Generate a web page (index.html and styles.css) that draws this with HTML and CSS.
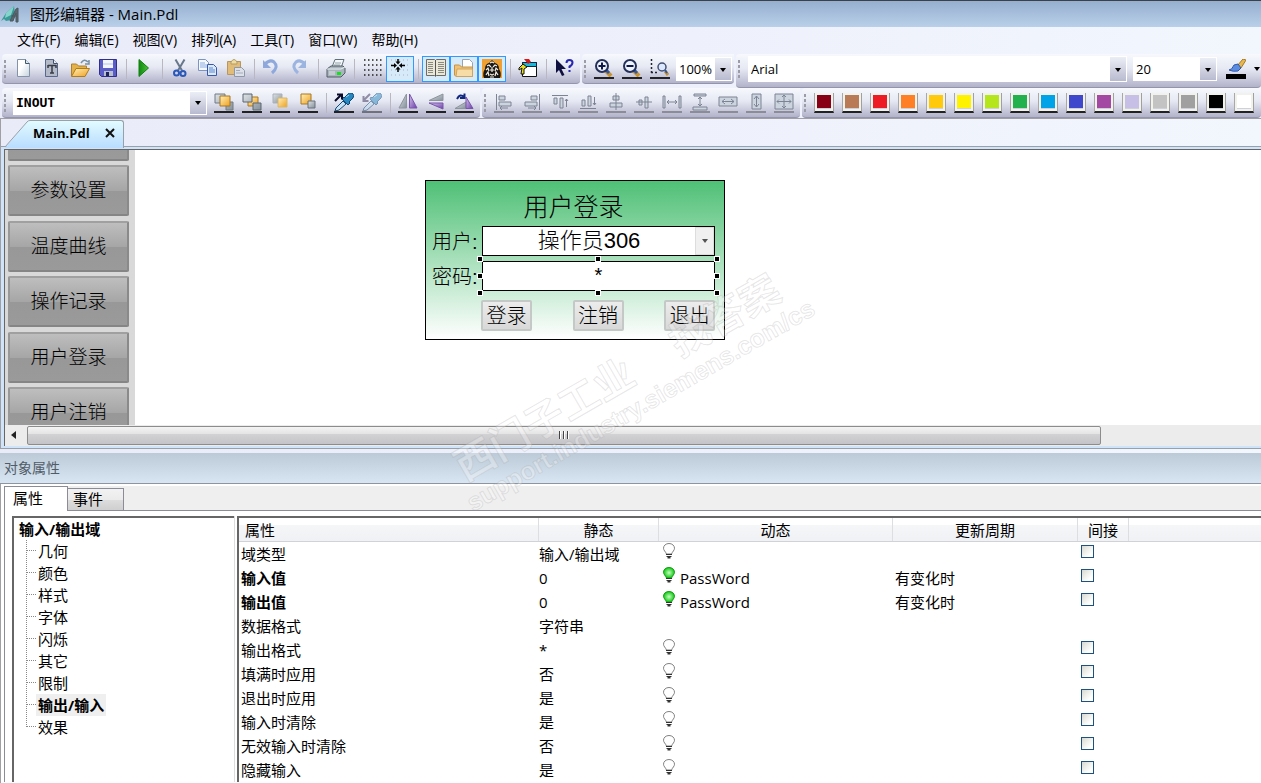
FILE: index.html
```html
<!DOCTYPE html>
<html lang="zh-CN">
<head>
<meta charset="utf-8">
<title>图形编辑器 - Main.Pdl</title>
<link rel="stylesheet" href="styles.css">
</head>
<body>
<svg class="defs" width="0" height="0" aria-hidden="true">
  <defs>
    <linearGradient id="gPage" x1="0" y1="0" x2="1" y2="1"><stop offset=".4" stop-color="#fff"/><stop offset="1" stop-color="#c3d3dc"/></linearGradient>
    <linearGradient id="gGold" x1="0" y1="0" x2="1" y2="1"><stop offset="0" stop-color="#fff0b8"/><stop offset="1" stop-color="#f0a020"/></linearGradient>
    <linearGradient id="gGray" x1="0" y1="0" x2="1" y2="1"><stop offset="0" stop-color="#dfe3e6"/><stop offset="1" stop-color="#84909a"/></linearGradient>
    <linearGradient id="gGreen" x1="0" y1="0" x2="1" y2="0"><stop offset="0" stop-color="#0f8a10"/><stop offset="1" stop-color="#4cc038"/></linearGradient>
    <linearGradient id="gViolet" x1="0" y1="0" x2="1" y2="1"><stop offset="0" stop-color="#d8c8ec"/><stop offset="1" stop-color="#6a3ca8"/></linearGradient>
    <linearGradient id="gTab" x1="0" y1="0" x2="0" y2="1"><stop offset="0" stop-color="#e2fbff"/><stop offset="1" stop-color="#b9dcff"/></linearGradient>
    <radialGradient id="gLamp"><stop offset="0" stop-color="#c8ffc0"/><stop offset="1" stop-color="#10c814"/></radialGradient>
    <symbol id="bulb" viewBox="0 0 12 16">
      <path d="M6 .5C2.800.5.5 2.600.5 5.200c0 2.200 2 3.300 3 5.800h5c1-2.500 3-3.600 3-5.800C11.500 2.600 9.200.5 6 .5z" fill="#fff" stroke="#808080"/>
      <path d="M3 11.500h6M3.500 13.500h5" stroke="#333" fill="none"/><path d="M4.500 14h3v1.500h-3z" fill="#333"/>
    </symbol>
    <symbol id="bulb-on" viewBox="0 0 12 16">
      <path d="M6 .5C2.800.5.5 2.600.5 5.200c0 2.200 2 3.300 3 5.800h5c1-2.500 3-3.600 3-5.800C11.500 2.600 9.200.5 6 .5z" fill="url(#gLamp)" stroke="#12a012"/>
      <path d="M3 11.500h6M3.500 13.500h5" stroke="#333" fill="none"/><path d="M4.500 14h3v1.500h-3z" fill="#333"/>
    </symbol>
    <symbol id="down" viewBox="0 0 8 8"><path d="M1 2h6L4 6z" fill="#000"/></symbol>
    <symbol id="dropper" viewBox="0 0 20 18">
      <path d="M1 18l1-3 7-7 3 3-7 6z" fill="#c8e4f4" stroke="#184878"/>
      <path d="M8 6l6 6 2-2-1-1 4-4q2-3-1-5-3-1-5 2l-3 3-1-1z" fill="#2a88c0" stroke="#0e4878"/>
      <path d="M12 4l3-2" stroke="#9ad8f8"/>
    </symbol>
  </defs>
</svg>

<header class="titlebar">
  <svg class="logo" viewBox="0 0 20 18"><path d="M1 16L6 8 14 1l1 8-4 6-5 1-2-2z" fill="#3a9a98"/><path d="M6 8l8-7-3 9-6 3z" fill="#84d4cc"/><path d="M10 16l6-12 2-1v14h-2V8l-3 8zM11 11h6" stroke="#4a5860" fill="#5c6870"/></svg>
  <h1 class="title">图形编辑器 - Main.Pdl</h1>
</header>

<nav class="menubar" aria-label="主菜单">
  <button>文件(F)</button><button>编辑(E)</button><button>视图(V)</button><button>排列(A)</button><button>工具(T)</button><button>窗口(W)</button><button>帮助(H)</button>
</nav>

<div class="toolrow">
  <div class="tools" role="toolbar" aria-label="标准">
    <span class="grip"></span>
    <button class="tool" aria-label="新建"><svg viewBox="0 0 20 20"><path d="M3.500.5h8l4 4v13h-12z" fill="url(#gPage)" stroke="#8494a8"/><path d="M11.500.5v4h4" fill="#dce8f0" stroke="#40586c"/></svg></button>
    <button class="tool" aria-label="新建文本"><svg viewBox="0 0 20 20"><path d="M3.500.5h8l4 4v13h-12z" fill="#b4bac8" stroke="#58688c"/><path d="M11.500.5v4h4" fill="#e8eef4" stroke="#40506c"/><path d="M6 6.500h8M10 7v7M8 14h4M6 6v3M14 6v3" stroke="#383c48" stroke-width="1.500" fill="none"/></svg></button>
    <button class="tool" aria-label="打开"><svg viewBox="0 0 20 20"><path d="M1.500 17V5h5l2 2h8v4" fill="#e4b048" stroke="#b08028"/><path d="M1.500 17.500L6 9.500h13.500l-4.500 8z" fill="url(#gGold)" stroke="#b07c18"/><path d="M11 4q3-5 7-1m1-2v4h-4" fill="none" stroke="#7890a4" stroke-width="1.500"/></svg></button>
    <button class="tool" aria-label="保存"><svg viewBox="0 0 20 20"><path d="M1.500.5h17v17H3.500l-2-2z" fill="#5a5cc8" stroke="#30308c"/><path d="M5 1h10v8H5z" fill="#f0f4fc"/><path d="M5 5h10" stroke="#b8c4e4"/><path d="M6 12h9v5H6z" fill="#b8c0cc"/><path d="M8 13h3v4H8z" fill="#20245c"/></svg></button>
    <span class="sep"></span>
    <button class="tool" aria-label="运行"><svg viewBox="0 0 20 20"><path d="M5 .5L14.500 9 5 17.500z" fill="url(#gGreen)" stroke="#108010"/></svg></button>
    <span class="sep"></span>
    <button class="tool" aria-label="剪切"><svg viewBox="0 0 20 20"><path d="M5.500.5l6.500 11M14.500.5L8 11.500" stroke="#68788c" stroke-width="2"/><circle cx="6.500" cy="14" r="2.500" fill="none" stroke="#2a58b8" stroke-width="2"/><circle cx="13" cy="14.500" r="2.500" fill="none" stroke="#2a58b8" stroke-width="2"/></svg></button>
    <button class="tool" aria-label="复制"><svg viewBox="0 0 20 20"><path d="M.5.5h7l3 3v8H.5z" fill="#f4f8ff" stroke="#7c94c0"/><path d="M2 4h5M2 6h7M2 8h7" stroke="#8cacdc"/><path d="M9.500 5.500h6l3 3v8h-9z" fill="#dce8fc" stroke="#3858a8"/><path d="M11 9h4M11 11h6M11 13h6" stroke="#5888d0"/></svg></button>
    <button class="tool" aria-label="粘贴"><svg viewBox="0 0 20 20"><path d="M1.500 2.500h13v13h-13z" fill="#e0bc78" stroke="#b8965c"/><path d="M5 3q3-5 6 0v2H5z" fill="#f0dca0" stroke="#b09c68"/><path d="M8.500 8.500h7l3 3v6h-10z" fill="#dce0e8" stroke="#9098a8"/><path d="M10 11.500h4M10 14h7" stroke="#a4acbc"/></svg></button>
    <span class="sep"></span>
    <button class="tool" aria-label="撤销"><svg viewBox="0 0 20 20"><path d="M3 5q5-5 9-2 5 5-2 11" stroke="#8ea8dc" stroke-width="3" fill="none"/><path d="M1 1v8h8z" fill="#8ea8dc"/></svg></button>
    <button class="tool" aria-label="重做"><svg viewBox="0 0 20 20"><path d="M15 5Q10 0 6 3q-5 5 2 11" stroke="#9cb4e0" stroke-width="3" fill="none"/><path d="M16 1v8H8z" fill="#9cb4e0"/></svg></button>
    <span class="sep"></span>
    <button class="tool" aria-label="打印"><svg viewBox="0 0 20 20"><path d="M6 8l3-7.500h9L15 9" fill="#f4f8fa" stroke="#607078"/><path d="M9 4h6M8 6h6" stroke="#90a0a8"/><path d="M1 10l4-3h12l2 2v5l-4 4H1z" fill="#aab4bc" stroke="#505c64"/><path d="M1 10h14l4-2" fill="none" stroke="#e8f0f0"/><path d="M11 13h4v3h-4z" fill="#18e020"/><path d="M3 13h6M3 15h6" stroke="#dfe5e8"/></svg></button>
    <span class="sep"></span>
    <button class="tool" aria-label="网格"><svg viewBox="0 0 20 20"><path d="M2 1h18M2 6h18M2 11h18M2 16h18" stroke="#222" stroke-width="1.500" stroke-dasharray="1.500 2.500"/></svg></button>
    <button class="tool on" aria-label="对齐网格" aria-pressed="true"><svg viewBox="0 0 20 20"><path d="M1 1h18M1 6h18M1 11h18M1 16h18" stroke="#a8b4c0" stroke-dasharray="1 3"/><path d="M8 0v3M8 10v3M1 6.500h3M12 6.500h3" stroke="#000" stroke-width="1.500"/><path d="M5.500 2.500h5L8 5.500zM5.500 10.500h5L8 7.500zM4 4v5l3-2.500zM12 4v5L9 6.500z" fill="#000"/></svg></button>
    <span class="sep"></span>
    <button class="tool on" aria-label="对象选项板" aria-pressed="true"><svg viewBox="0 0 20 20"><path d="M.5.500h8l1 1 1-1h9v16h-9l-1 1-1-1h-8z" fill="#ece8d8" stroke="#6c6c68"/><path d="M9.500 1v16" stroke="#555"/><path d="M2 3.500h5M2 5.500h5M2 7.500h5M2 9.500h5M2 11.500h5M2 13.500h5M12 3.500h6M12 5.500h6M12 7.500h6M12 9.500h6M12 11.500h6M12 13.500h6" stroke="#8a8a80"/></svg></button>
    <button class="tool on" aria-label="库" aria-pressed="true"><svg viewBox="0 0 20 20"><path d="M8.500 9V.5h7l3 3V10" fill="#fff" stroke="#98a4b0"/><path d="M.5 16V6h5l2 2h11v9.500H2z" fill="#f2c272" stroke="#c49448"/><path d="M3 10h15.500v7.500H2z" fill="#f8dca8" stroke="#d0a45c"/></svg></button>
    <button class="tool on" aria-label="变量" aria-pressed="true"><svg viewBox="0 0 20 20"><path d="M0 0h20v19H0z" fill="#f0a030"/><path d="M2 19q-2-5 1-9 0-5 4-6l3-3 3 3q4 1 4 6 3 4 1 9z" fill="#181818"/><path d="M8 4l2-1 2 1M5 7l2-1 2 2M15 7l-2-1-2 2M4 11l2-2 1 3M16 11l-2-2-1 3M8 11h4M10 8v5M4 16l2-3 1 4M16 16l-2-3-1 4M8 15l2 1 2-1M8 18h4" stroke="#f4ece0" stroke-width="1.200" fill="none"/></svg></button>
    <span class="sep"></span>
    <button class="tool" aria-label="组态对话框"><svg viewBox="0 0 20 20"><path d="M4.500 3.500h14v14h-14z" fill="#fff" stroke="#111"/><path d="M4.500 3.500h14v4h-14z" fill="#18b8d8" stroke="#124"/><path d="M6 0h5l2 3-3 2z" fill="#d81818"/><path d="M1 9l4-4 4 3-3 2v5H3l1-6-3 2z" fill="#e8e020" stroke="#111"/></svg></button>
    <span class="sep"></span>
    <button class="tool" aria-label="这是什么"><svg viewBox="0 0 20 20"><path d="M2 0v14l3-3 3 6 2.500-1-3-6H12z" fill="#101040"/><path d="M12.500 4q0-3 3-3t3 2.500-3 4V9M15.500 11v2" stroke="#2828b0" stroke-width="2" fill="none"/></svg></button>
  </div>
  <div class="tools" role="toolbar" aria-label="缩放">
    <span class="grip"></span>
    <button class="tool under" aria-label="放大"><svg viewBox="0 0 20 18"><path d="M12 12l5 5" stroke="#c8922c" stroke-width="4"/><path d="M12 11l3 3" stroke="#2858b0" stroke-width="3"/><circle cx="8" cy="7" r="6" fill="#eef4ff" stroke="#243058" stroke-width="2"/><path d="M4.500 7h7M8 3.500v7" stroke="#101848" stroke-width="2"/></svg></button>
    <button class="tool under" aria-label="缩小"><svg viewBox="0 0 20 18"><path d="M12 12l5 5" stroke="#c8922c" stroke-width="4"/><path d="M12 11l3 3" stroke="#2858b0" stroke-width="3"/><circle cx="8" cy="7" r="6" fill="#eef4ff" stroke="#243058" stroke-width="2"/><path d="M4.500 7h7" stroke="#101848" stroke-width="2"/></svg></button>
    <button class="tool under" aria-label="缩放区域"><svg viewBox="0 0 20 18"><path d="M1.500 0v14M1 13.500h8" stroke="#223" stroke-width="1.500" stroke-dasharray="2 2"/><path d="M15 12l3 4" stroke="#c8922c" stroke-width="3"/><circle cx="12" cy="8" r="4" fill="#dce8ff" stroke="#445070" stroke-width="1.500"/><path d="M15 11l2 3" stroke="#2858b0" stroke-width="2"/></svg></button>
    <label class="combo zoom"><select aria-label="缩放比例"><option>100%</option></select><svg class="arrow"><use href="#down" x="4" y="8" width="8" height="8"/></svg></label>
  </div>
  <div class="tools tall" role="toolbar" aria-label="字体">
    <span class="grip"></span>
    <label class="combo font"><select aria-label="字体"><option>Arial</option></select><svg class="arrow"><use href="#down" x="4" y="9" width="8" height="8"/></svg></label>
    <label class="combo size"><select aria-label="字号"><option>20</option></select><svg class="arrow"><use href="#down" x="4" y="8" width="8" height="8"/></svg></label>
    <button class="tool" aria-label="字体颜色"><svg viewBox="0 0 20 20"><path d="M11 7l6-7 3 1-5 8z" fill="#e8b850" stroke="#a87820"/><path d="M3 11q3 0 5-5l4-1 3 4-3 3q-5 1-9-1z" fill="#5c8ce0" stroke="#2c58b0"/><path d="M0 15h20v5H0z"/></svg></button>
    <button class="more" aria-label="更多颜色"><svg viewBox="0 0 8 8"><use href="#down"/></svg></button>
  </div>
</div>

<div class="toolrow second">
  <div class="tools" role="toolbar" aria-label="对象">
    <span class="grip"></span>
    <label class="combo object"><select aria-label="对象"><option>INOUT</option></select><svg class="arrow"><use href="#down" x="4" y="7" width="8" height="8"/></svg></label>
    <button class="tool under" aria-label="置于最前"><svg viewBox="0 0 20 18"><path d="M1 1h10v9H1zM12 9h7v8h-7z" fill="url(#gGray)" stroke="#707a84"/><path d="M6 3h10v10H6z" fill="url(#gGold)" stroke="#a87820"/></svg></button>
    <button class="tool under" aria-label="置于最后"><svg viewBox="0 0 20 18"><path d="M6 4h10v9H6z" fill="url(#gGold)" stroke="#a87820"/><path d="M1 1h9v8H1zM11 10h8v7h-8z" fill="url(#gGray)" stroke="#5c6670"/></svg></button>
    <button class="tool under" aria-label="前移"><svg viewBox="0 0 20 18"><path d="M3 1h9v9H3z" fill="url(#gGray)" stroke="#a8b0b8"/><path d="M8 5h9v9H8z" fill="url(#gGold)" stroke="#d8b868"/></svg></button>
    <button class="tool under" aria-label="后移"><svg viewBox="0 0 20 18"><path d="M3 1h10v10H3z" fill="url(#gGold)" stroke="#a87820"/><path d="M10 8h7v7h-7z" fill="url(#gGray)" stroke="#68727c"/></svg></button>
    <span class="sep"></span>
    <button class="tool under" aria-label="复制属性"><svg viewBox="0 0 20 18"><use href="#dropper"/><path d="M1 8l6-6M3 1.500h5v5" stroke="#080828" stroke-width="2" fill="none"/></svg></button>
    <button class="tool under faded" aria-label="分配属性"><svg viewBox="0 0 20 18"><use href="#dropper"/><path d="M8 1L2 7M1.500 3v5h5" stroke="#383058" stroke-width="2" fill="none"/></svg></button>
    <span class="sep"></span>
    <button class="tool under" aria-label="水平镜像"><svg viewBox="0 0 20 18"><path d="M8.500 1v14H1z" fill="url(#gGray)" stroke="#8c949c"/><path d="M11.500 1v14H19z" fill="url(#gViolet)" stroke="#7854ac"/></svg></button>
    <button class="tool under" aria-label="垂直镜像"><svg viewBox="0 0 20 18"><path d="M3 7.500h14V1z" fill="url(#gGray)" stroke="#8c949c"/><path d="M3 10h14v6z" fill="url(#gViolet)" stroke="#7854ac"/></svg></button>
    <button class="tool under" aria-label="旋转"><svg viewBox="0 0 20 18"><path d="M1 15.500h11V9z" fill="url(#gGray)" stroke="#8c949c"/><path d="M12 4v11.500h7z" fill="url(#gViolet)" stroke="#7854ac"/><path d="M3 6q3-6 7-2m.5-3.500V5H6" stroke="#102880" stroke-width="2" fill="none"/></svg></button>
  </div>
  <div class="tools" role="toolbar" aria-label="对齐">
    <span class="grip"></span>
    <button class="tool under gray" aria-label="左对齐"><svg viewBox="0 0 20 18"><path d="M2.500 1v16M5 3h6v4H5zM5 9h12v4H5zM6 15h8M8 13l-2 2 2 2"/></svg></button>
    <button class="tool under gray" aria-label="右对齐"><svg viewBox="0 0 20 18"><path d="M17.500 1v16M9 3h6v4H9zM3 9h12v4H3zM6 15h8M12 13l2 2-2 2"/></svg></button>
    <button class="tool under gray" aria-label="顶端对齐"><svg viewBox="0 0 20 18"><path d="M2 2.500h16M4 5h3v6H4zM10 5h3v10h-3zM16.500 14V6M15 8l1.500-2L18 8"/></svg></button>
    <button class="tool under gray" aria-label="底端对齐"><svg viewBox="0 0 20 18"><path d="M2 15.500h16M4 7h3v6H4zM10 3h3v10h-3zM16.500 4v8M15 10l1.500 2L18 10"/></svg></button>
    <button class="tool under gray" aria-label="水平居中"><svg viewBox="0 0 20 18"><path d="M10 0v17M7 3h6v4H7zM4 10h12v4H4z"/></svg></button>
    <button class="tool under gray" aria-label="垂直居中"><svg viewBox="0 0 20 18"><path d="M2 9h16M5 7h3v5H5zM11 4h3v11h-3z"/></svg></button>
    <button class="tool under gray" aria-label="水平等距"><svg viewBox="0 0 20 18"><path d="M1 3h2v12H1zM17 3h2v12h-2zM5 9h10M7 7L5 9l2 2M13 7l2 2-2 2"/></svg></button>
    <button class="tool under gray" aria-label="垂直等距"><svg viewBox="0 0 20 18"><path d="M4 1h12v2H4zM3 14h14v3H3zM10 4v9M8 6l2-2 2 2M8 11l2 2 2-2"/></svg></button>
    <button class="tool under gray" aria-label="等宽"><svg viewBox="0 0 20 18"><path d="M1 4h18v9H1zM4 8.500h12M7 6L4 8.500 7 11M13 6l3 2.500L13 11"/></svg></button>
    <button class="tool under gray" aria-label="等高"><svg viewBox="0 0 20 18"><path d="M6 1h9v15H6zM10.500 3v11M8 6l2.500-3L13 6M8 11l2.500 3 2.500-3"/></svg></button>
    <button class="tool under gray" aria-label="等大小"><svg viewBox="0 0 20 18"><path d="M1 1h18v15H1zM10 2v13M3 8.500h14M8 4l2-2 2 2M8 13l2 2 2-2M5 6.500l-2 2 2 2M15 6.500l2 2-2 2"/></svg></button>
  </div>
  <div class="tools fill" role="toolbar" aria-label="调色板">
    <span class="grip"></span>
    <button class="tool" aria-label="深红"><i class="swatch" style="background:#880015"></i></button>
    <button class="tool" aria-label="棕色"><i class="swatch" style="background:#b97a57"></i></button>
    <button class="tool" aria-label="红色"><i class="swatch" style="background:#ed1c24"></i></button>
    <button class="tool" aria-label="橙色"><i class="swatch" style="background:#ff7f27"></i></button>
    <button class="tool" aria-label="金色"><i class="swatch" style="background:#ffc90e"></i></button>
    <button class="tool" aria-label="黄色"><i class="swatch" style="background:#fff200"></i></button>
    <button class="tool" aria-label="黄绿"><i class="swatch" style="background:#b5e61d"></i></button>
    <button class="tool" aria-label="绿色"><i class="swatch" style="background:#22b14c"></i></button>
    <button class="tool" aria-label="天蓝"><i class="swatch" style="background:#00a2e8"></i></button>
    <button class="tool" aria-label="靛蓝"><i class="swatch" style="background:#3f48cc"></i></button>
    <button class="tool" aria-label="紫色"><i class="swatch" style="background:#a349a4"></i></button>
    <button class="tool" aria-label="淡紫"><i class="swatch" style="background:#c8bfe7"></i></button>
    <button class="tool" aria-label="浅灰"><i class="swatch" style="background:#c3c3c3"></i></button>
    <button class="tool" aria-label="灰色"><i class="swatch" style="background:#a0a0a0"></i></button>
    <button class="tool" aria-label="黑色"><i class="swatch" style="background:#000"></i></button>
    <button class="tool" aria-label="白色"><i class="swatch" style="background:#fff"></i></button>
  </div>
</div>

<main class="document">
  <div class="doctabs">
    <div class="doctab">
      <svg class="slope" viewBox="0 0 25 28"><path d="M0 28L22 2q1-1.500 3-1.500V28z" fill="url(#gTab)"/><path d="M0 27L22 2q1-1.500 3-1.500" fill="none" stroke="#98a0a8"/></svg>
      <div class="doctab-body"><a href="#canvas">Main.Pdl</a>
        <button class="close" aria-label="关闭"><svg viewBox="0 0 10 10"><path d="M1 1l8 8M9 1L1 9" stroke="#111" stroke-width="2"/></svg></button></div>
    </div>
  </div>
  <div class="frame">
    <div class="canvas" id="canvas">
      <div class="sidemenu">
        <button aria-label="上一项"></button><button>参数设置</button><button>温度曲线</button><button>操作记录</button><button>用户登录</button><button>用户注销</button>
      </div>
      <form class="login" onsubmit="return false">
        <h2>用户登录</h2>
        <div class="row"><label for="user">用户:</label>
          <div class="userbox"><select id="user"><option>操作员306</option></select><span class="userarrow"><svg viewBox="0 0 8 8"><use href="#down"/></svg></span></div></div>
        <div class="row"><label for="pass">密码:</label>
          <div class="selected"><input id="pass" type="text" value="*">
            <i class="h n w"></i><i class="h n c"></i><i class="h n e"></i><i class="h m w"></i><i class="h m e"></i><i class="h s w"></i><i class="h s c"></i><i class="h s e"></i></div></div>
        <div class="actions"><button>登录</button><button>注销</button><button>退出</button></div>
      </form>
    </div>
    <div class="scroll">
      <button class="scroll-left" aria-label="向左滚动"><svg viewBox="0 0 8 8"><path d="M6 0v8L1 4z" fill="#222"/></svg></button>
      <div class="track"><div class="thumb"><i></i><i></i><i></i></div></div>
    </div>
  </div>
</main>

<section class="properties">
  <h2 class="panel-title">对象属性</h2>
  <div class="panel">
    <div class="tabs" role="tablist"><button role="tab" aria-selected="true">属性</button><button role="tab" aria-selected="false">事件</button></div>
    <div class="split">
      <div class="tree">
        <b>输入/输出域</b>
        <ul><li><a href="#g1">几何</a></li><li><a href="#g2">颜色</a></li><li><a href="#g3">样式</a></li><li><a href="#g4">字体</a></li><li><a href="#g5">闪烁</a></li><li><a href="#g6">其它</a></li><li><a href="#g7">限制</a></li><li><a href="#g8" class="current">输出/输入</a></li><li><a href="#g9">效果</a></li></ul>
      </div>
      <div class="grid">
        <table>
          <colgroup><col class="c-name"><col class="c-static"><col class="c-dyn"><col class="c-cycle"><col class="c-ind"><col></colgroup>
          <thead><tr><th>属性</th><th>静态</th><th>动态</th><th>更新周期</th><th>间接</th><th></th></tr></thead>
          <tbody>
            <tr><td>域类型</td><td>输入/输出域</td><td><svg class="bulb"><use href="#bulb"/></svg></td><td></td><td><input type="checkbox" aria-label="域类型 间接"></td><td></td></tr>
            <tr class="set"><td>输入值</td><td>0</td><td><svg class="bulb"><use href="#bulb-on"/></svg>PassWord</td><td>有变化时</td><td><input type="checkbox" aria-label="输入值 间接"></td><td></td></tr>
            <tr class="set"><td>输出值</td><td>0</td><td><svg class="bulb"><use href="#bulb-on"/></svg>PassWord</td><td>有变化时</td><td><input type="checkbox" aria-label="输出值 间接"></td><td></td></tr>
            <tr><td>数据格式</td><td>字符串</td><td></td><td></td><td></td><td></td></tr>
            <tr><td>输出格式</td><td>*</td><td><svg class="bulb"><use href="#bulb"/></svg></td><td></td><td><input type="checkbox" aria-label="输出格式 间接"></td><td></td></tr>
            <tr><td>填满时应用</td><td>否</td><td><svg class="bulb"><use href="#bulb"/></svg></td><td></td><td><input type="checkbox" aria-label="填满时应用 间接"></td><td></td></tr>
            <tr><td>退出时应用</td><td>是</td><td><svg class="bulb"><use href="#bulb"/></svg></td><td></td><td><input type="checkbox" aria-label="退出时应用 间接"></td><td></td></tr>
            <tr><td>输入时清除</td><td>是</td><td><svg class="bulb"><use href="#bulb"/></svg></td><td></td><td><input type="checkbox" aria-label="输入时清除 间接"></td><td></td></tr>
            <tr><td>无效输入时清除</td><td>否</td><td><svg class="bulb"><use href="#bulb"/></svg></td><td></td><td><input type="checkbox" aria-label="无效输入时清除 间接"></td><td></td></tr>
            <tr><td>隐藏输入</td><td>是</td><td><svg class="bulb"><use href="#bulb"/></svg></td><td></td><td><input type="checkbox" aria-label="隐藏输入 间接"></td><td></td></tr>
          </tbody>
        </table>
      </div>
    </div>
  </div>
</section>

<svg class="watermark" viewBox="0 0 400 260" aria-hidden="true">
  <g transform="translate(33 252) rotate(-30)">
    <text class="wm-cn" x="8" y="-30">西门子工业</text><text class="wm-cn" x="256" y="-30">找答案</text>
    <text class="wm-url" x="0" y="0">support.industry.siemens.com/cs</text>
  </g>
</svg>
</body>
</html>
```
FILE: styles.css
```css
* { box-sizing: border-box; }
body {
  margin: 0;
  height: 100vh;
  overflow: hidden;
  position: relative;
  display: flex;
  flex-direction: column;
  background: linear-gradient(90deg, #e9ebf9, #f2f6fd);
  color: #000;
  font: 15px/24px "Open Sans", "Noto Sans CJK SC", sans-serif;
}
button, select, input { font: inherit; color: inherit; }
button { padding: 0; border: 0; background: none; }
a { color: inherit; text-decoration: none; }
h1, h2, ul { margin: 0; padding: 0; font-weight: 400; }
svg { display: block; flex: none; }
.defs { position: absolute; }

.titlebar {
  display: flex;
  align-items: center;
  gap: 10px;
  flex: none;
  height: 27px;
  border-top: 1px solid #3c4048;
  background: linear-gradient(#95afcf, #bad0e9);
}
.logo { width: 20px; height: 18px; }
.title { font-size: 15px; line-height: 24px; }

.menubar { display: flex; flex: none; gap: 14px; height: 27px; padding: 0 0 2px 17px; font-size: 14px; }

.toolrow { display: flex; flex: none; gap: 2px; height: 34px; padding-left: 2px; }
.tools {
  display: flex;
  align-items: center;
  height: 30px;
  padding-right: 2px;
  border-bottom: 1px solid #9494aa;
  border-radius: 4px 0 4px 4px;
  background: linear-gradient(#f7f9fe, #e6e8f3 45%, #b2b2ca);
}
.tools.tall { flex: 1; height: 34px; min-width: 0; padding: 0 0 3px; }
.second { height: 31px; border-bottom: 1px solid #a0a0a4; }
.fill { flex: 1; }
.grip {
  flex: none;
  width: 8px;
  height: 18px;
  background: linear-gradient(#9c9ca8 3px, transparent 3px) 2px 0 / 2px 5px repeat-y;
}
.sep { flex: none; width: 8px; height: 20px; background: linear-gradient(#b8b8c0, #b8b8c0) 4px 0 / 1px 20px no-repeat; }
.tool { display: flex; flex: none; align-items: center; justify-content: center; width: 28px; height: 26px; border: 1px solid transparent; }
.tool svg { width: 20px; height: 20px; }
.tool.on { border-color: #3399ff; background: #d7eafa; }
.tool.under svg { border-bottom: 2px solid #222; }
.tool.faded svg { opacity: .5; }
.tool.gray svg { fill: #ccd4e0; stroke: #7c8494; border-color: #8c8c98; }
.swatch {
  width: 20px;
  height: 20px;
  padding: 2px 2px 3px;
  background-clip: content-box !important;
  border-left: 1px solid #a8a8a8;
  border-right: 1px solid #a0a0a0;
  border-bottom: 2px solid #222;
  box-shadow: inset 0 0 0 2px #f2f2ec;
}
.combo { display: flex; height: 24px; padding: 1px; background: #fff; }
.combo select { flex: 1; min-width: 0; padding: 0 0 0 2px; border: 0; background: #fff; appearance: none; font-size: 13px; line-height: 22px; }
.arrow { width: 16px; height: 100%; background: linear-gradient(#eceef6, #b8bacf); }
.zoom { width: 56px; margin-left: 2px; }
.font { flex: 1; height: 26px; margin: 0 6px 0 4px; }
.size { width: 84px; margin-right: 5px; }
.object { width: 194px; margin: 0 3px; }
.object select { font: bold 13px/20px "DejaVu Sans Mono", monospace; }
.more { width: 11px; }
.more svg { width: 8px; height: 8px; margin-left: 3px; }

.document { display: flex; flex: 1; flex-direction: column; min-height: 0; border-left: 1px solid #a0a0a4; border-bottom: 1px solid #98a0a8; }
.doctabs { display: flex; flex: none; height: 27px; padding: 1px 0 0 4px; }
.doctab { display: flex; height: 28px; position: relative; z-index: 1; }
.slope { width: 25px; height: 28px; }
.doctab-body {
  display: flex;
  align-items: center;
  gap: 15px;
  padding: 0 8px 3px 3px;
  border-top: 1px solid #98a0a8;
  border-right: 1px solid #98a0a8;
  border-radius: 0 3px 0 0;
  background: linear-gradient(#e2fbff, #b9dcff);
  font-weight: 700;
  font-size: 13px;
}
.close svg { width: 10px; height: 10px; }
.frame {
  display: flex;
  flex: 1;
  flex-direction: column;
  min-height: 0;
  padding: 2px 0 2px 3px;
  border-top: 1px solid #98a0a8;
  background: #cfe4fa;
}
.canvas { position: relative; flex: 1; min-height: 0; overflow: hidden; border-top: 1px solid #666; border-left: 1px solid #666; background: #fff; }
.sidemenu { display: flex; flex-direction: column; width: 130px; padding-left: 3px; margin-top: -40px; background: #d9d9d9; }
.sidemenu button {
  flex: none;
  width: 121px;
  height: 51px;
  margin-bottom: 4px;
  padding-bottom: 3px;
  border: 2px solid #8c8c8c;
  border-color: #a0a0a0 #8a8a8a #858585 #989898;
  border-radius: 2px;
  background: linear-gradient(#bebebe, #a6a6a6 50%, #989898 52%, #9a9a9a);
  font: 300 19px/28px "Noto Sans CJK SC", sans-serif;
}
.sidemenu button:nth-child(even) { margin-bottom: 5px; }
.login {
  position: absolute;
  left: 420px;
  top: 30px;
  width: 300px;
  padding: 11px 9px 8px 6px;
  border: 1px solid #000;
  background: linear-gradient(#4fc076, #a8e0bb 50%, #fff);
  font: 300 20px/30px "Liberation Sans", "Noto Sans CJK SC", sans-serif;
}
.login h2 { padding-bottom: 4px; font-size: 25px; font-weight: 300; text-align: center; }
.row { display: flex; justify-content: space-between; margin-bottom: 5px; }
.row label { line-height: 32px; height: 30px; }
.userbox { display: flex; width: 233px; height: 30px; border: 1px solid #000; background: #fff; }
.userbox select { flex: 1; min-width: 0; padding: 0; border: 0; background: #fff; appearance: none; font-size: 22px; line-height: 26px; text-align-last: center; }
.userarrow { display: flex; align-items: center; justify-content: center; width: 19px; border: 1px solid #ddd; background: #f0f0f0; }
.userarrow svg { width: 8px; height: 8px; opacity: .65; }
.selected { position: relative; width: 233px; height: 30px; }
.selected input { display: block; width: 100%; height: 30px; padding: 0 0 2px; border: 1px solid #000; border-radius: 0; text-align: center; }
.h { position: absolute; width: 6px; height: 6px; background: #000; border: 1px solid #fff; }
.h.n { top: -5px; } .h.m { top: 12px; } .h.s { bottom: -5px; }
.h.w { left: -5px; } .h.c { left: 113px; } .h.e { right: -5px; }
.actions { display: flex; justify-content: space-between; padding: 4px 0 0 49px; }
.actions button { width: 51px; height: 31px; border: 2px solid #c4c8c6; border-radius: 2px; background: linear-gradient(#ececec, #d8d8d8); line-height: 26px; }

.scroll { display: flex; flex: none; height: 21px; border-left: 1px solid #666; background: #ececec; padding: 1px 0; }
.scroll-left { width: 22px; padding-left: 5px; }
.scroll-left svg { width: 8px; height: 8px; }
.track { flex: 1; }
.thumb {
  display: flex;
  align-items: center;
  justify-content: center;
  gap: 2px;
  width: 87%;
  height: 19px;
  border: 1px solid #8c8c8c;
  border-radius: 2px;
  background: linear-gradient(#f4f4f4, #e4e4e4 40%, #d2d2d4 42%, #c4c4c8);
}
.thumb i { width: 2px; height: 8px; border-right: 1px solid #fff; background: #444; }

.properties { flex: none; padding-top: 4px; }
.panel-title { height: 31px; padding: 3px 4px; border-bottom: 1px solid #9094a0; background: linear-gradient(#bccad7, #d8e5f2); color: #505c68; font-size: 14px; line-height: 24px; }
.panel { padding: 2px 0 1px 4px; border-left: 1px solid #a0a0a4; background: #fff; }
.tabs { display: flex; align-items: flex-end; height: 25px; margin-left: -1px; border-bottom: 1px solid #8c8c98; background: #efefef; }
.tabs button { width: 56px; height: 22px; padding-left: 5px; border: 1px solid #8c8c98; border-width: 1px 1px 0 0; background: linear-gradient(#f2f2f2, #ebebeb 50%, #ddd 52%, #cfcfcf); line-height: 20px; text-align: left; }
.tabs [aria-selected=true] { width: 64px; height: 25px; margin-bottom: -1px; padding: 0 0 2px 8px; border-left-width: 1px; background: #fff; }
.split { display: flex; gap: 3px; padding: 5px 0 0 7px; border-left: 1px solid #8c8c98; margin-left: -1px; }
.tree { flex: none; width: 222px; padding: 0 0 0 5px; border: solid #666; border-width: 2px 0 0 2px; box-shadow: 1px 0 #ddd; line-height: 22px; }
.tree b { display: block; }
.tree ul { margin-left: 7px; list-style: none; border-left: 1px dotted #888; height: 187px; }
.tree li { display: flex; align-items: center; height: 22px; }
.tree li::before { content: ""; width: 9px; border-top: 1px dotted #888; }
.tree a { padding: 0 2px; }
.tree .current { background: #efefef; font-weight: 700; }
.grid { flex: 1; min-width: 0; border: solid #666; border-width: 2px 0 0 2px; }
table { width: 100%; border-collapse: collapse; table-layout: fixed; }
.c-name { width: 299px; } .c-static { width: 120px; } .c-dyn { width: 234px; } .c-cycle { width: 185px; } .c-ind { width: 51px; }
th { height: 24px; padding: 1px 0 0 1px; border-right: 1px solid #dcdee2; border-bottom: 1px solid #d0d2d6; background: linear-gradient(#fff 30%, #f5f6f8 32%, #eff1f4); font-weight: 400; line-height: 22px; }
th:first-child { padding-left: 6px; text-align: left; }
th:last-child { border-right: 0; }
td { height: 24px; padding: 0 0 0 2px; vertical-align: top; white-space: nowrap; }
td:nth-child(2) { padding-left: 1px; }
td:nth-child(3) { padding-left: 5px; }
td:nth-child(4) { padding-left: 3px; }
td:nth-child(5) { padding-left: 4px; }
.set td:first-child { font-weight: 700; }
.bulb { float: left; width: 12px; height: 16px; margin: 1px 5px 0 0; }
td input { display: block; width: 13px; height: 13px; margin: 3px 0 0; appearance: none; border: 1px solid #1d5180; background: linear-gradient(135deg, #d8d8d2, #fff 75%); }

.watermark { position: absolute; left: 440px; top: 260px; width: 400px; height: 260px; pointer-events: none; fill: #fff; fill-opacity: .3; stroke: #999; stroke-opacity: .24; }
.wm-cn { font: 700 40px "Noto Sans CJK SC", sans-serif; }
.wm-url { font: 700 25px "Liberation Sans", sans-serif; }
```
